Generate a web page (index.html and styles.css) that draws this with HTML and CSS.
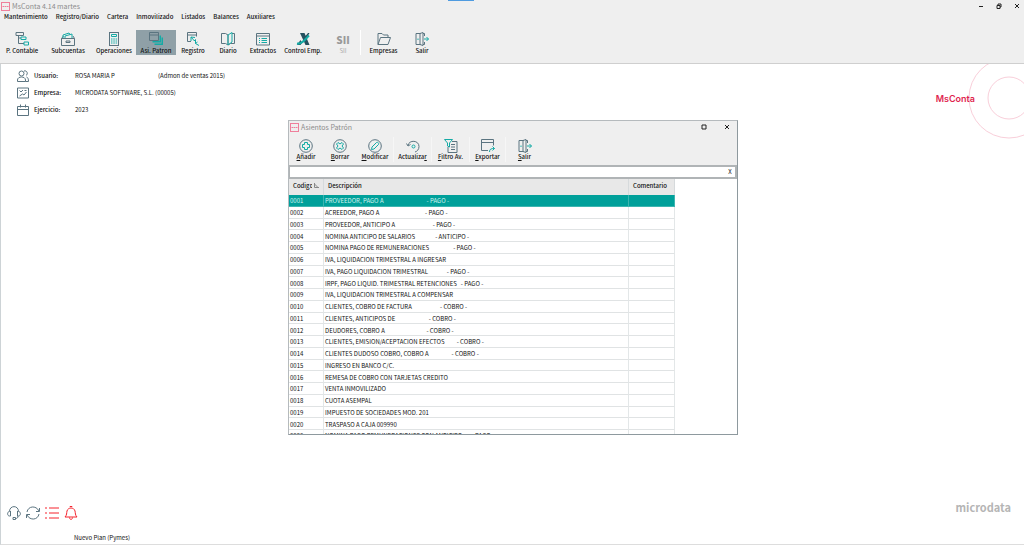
FILE: index.html
```html
<!DOCTYPE html>
<html lang="es">
<head>
<meta charset="utf-8">
<title>MsConta 4.14 martes</title>
<link rel="stylesheet" href="styles.css">
</head>
<body>
<svg class="defs" aria-hidden="true">
  <symbol id="i-exit" viewBox="0 0 14 14"><path d="M5.500 1.500H1v11h4.500M9.500 4V1.500H8M8 12.500h1.500V10"/><path d="M5 1.500 8 .5v13l-3-1z"/><path class="t" d="M9 7h4.500M11.500 5l2 2-2 2M3 6.500v1.500"/></symbol>
  <symbol id="i-app" viewBox="0 0 9 9"><rect x=".5" y=".5" width="8" height="8"/><path d="M1.500 4.500h2M4 4.500h1.500M6 4.500h1.500"/></symbol>
</svg>
<div class="app">
  <header class="top">
    <div class="titlebar">
      <svg class="logo"><use href="#i-app"/></svg>
      <h1 class="title">MsConta 4.14 martes</h1>
      <div class="wincontrols">
        <button aria-label="Minimizar"><svg viewBox="0 0 6 6"><path d="M1 3.500h4"/></svg></button>
        <button aria-label="Restaurar"><svg viewBox="0 0 6 6"><path d="M1 2.500h3v3H1zM2 2.500v-1.500h3v3H4"/></svg></button>
        <button aria-label="Cerrar"><svg viewBox="0 0 6 6"><path d="M1 1l4 4M5 1 1 5"/></svg></button>
      </div>
    </div>
    <nav class="menu">
      <button>Mantenimiento</button><button>Registro/Diario</button><button>Cartera</button><button>Inmovilizado</button><button>Listados</button><button>Balances</button><button>Auxiliares</button>
    </nav>
    <div class="toolbar">
      <button class="tool"><svg viewBox="0 0 14 14"><path d="M1 .5h7.500v3H1zM3.500 3.500v8H9M3.500 6H6"/><path class="t" d="M6 5h5v2.500H6zM9 10h4.500v3H9z"/></svg>P. Contable</button>
      <button class="tool"><svg viewBox="0 0 14 14"><path d="M.5 6.500h13v7H.5zM5 9h4v1.500H5zM.5 6.500 2.500 4M13.500 6.500 12 4"/><path class="t" d="M2 6V3l6-2 1 1.500M4 6V4l7-2v4"/></svg>Subcuentas</button>
      <button class="tool"><svg viewBox="0 0 14 14"><rect x="2.500" y=".5" width="9" height="13"/><path class="t" d="M4.500 2.500h5v2h-5zM4 7h1.500M6.300 7h1.500M8.600 7h1.500M4 9h1.500M6.300 9h1.500M8.600 9h1.500M4 11h1.500M6.300 11h1.500M8.600 11h1.500"/></svg>Operaciones</button>
      <button class="tool active" aria-pressed="true"><svg viewBox="0 0 14 14"><path class="fill" d="M10.500 3.500h1.500v7H3.500V9h7zM12.500 5.500H14V13H5.500v-1.500h7z"/><path d="M.5.5h9v8h-9zM.5 3h9"/></svg>Asi. Patron</button>
      <button class="tool"><svg viewBox="0 0 14 14"><path d="M5 9.500H1.500v-9h9v4M1.500 3h9"/><path class="t" d="M5 5l3.500 4M5 5l4 .5M5 5v4M8 9l1.500-1.500v4l3.500 2M9.500 11.500l2-1.500"/></svg>Registro</button>
      <button class="tool"><svg viewBox="0 0 14 14"><path d="M7 3 4.500 1.500H.5v10h4L7 13l2.500-1.500h4v-10H11M7 3v10"/><path class="t" d="M7 3l4-2.500v9.500L7 13z"/></svg>Diario</button>
      <button class="tool"><svg viewBox="0 0 14 14"><path d="M.5 1.500h13v11.500H.5zM.5 4h13"/><path class="t" d="M3 6.500h1M5.500 6.500H11M3 8.500h1M5.500 8.500H11M3 10.500h1M5.500 10.500H11"/></svg>Extractos</button>
      <button class="tool"><svg viewBox="0 0 14 14"><path class="dark" d="M4 1h4.500L13.500 13H9.500zM1 13l3.500-5 1.500 3-1.500 2zM9.500 4 12 1h1.500l-3 5z"/><path class="t wide" d="M1 11.500c5 1 8-4 12-8"/></svg>Control Emp.</button>
      <button class="tool off" disabled><span class="sii">SII</span>SII</button>
      <button class="tool first"><svg viewBox="0 0 14 14"><path d="M1 12.500V1.500h4L6.500 3H11v2.500M1 12.500l2.500-7h10L11 12.500z"/></svg>Empresas</button>
      <button class="tool"><svg><use href="#i-exit"/></svg>Salir</button>
    </div>
  </header>
  <main class="desk">
    <dl class="info">
      <dt><svg viewBox="0 0 12 12"><circle cx="4.500" cy="3.500" r="2.500"/><path d="M.5 11.500V10c0-4 8-4 8 0v1.500zM7 1c3-1 4.500 3 2 4.500M9.500 7c1.500.5 2 2 2 4.500h-3"/></svg>Usuario:</dt><dd>ROSA MARIA P</dd><dd>(Admon de ventas 2015)</dd>
      <dt><svg viewBox="0 0 12 12"><path d="M.5 1h11v10H.5zM2.500 3.500 4 5l2-2M7.500 3.500h2M2.500 9l3-2 1.500 1 2.500-3"/></svg>Empresa:</dt><dd class="long">MICRODATA SOFTWARE, S.L. (00005)</dd>
      <dt><svg viewBox="0 0 12 12"><path d="M.5 2.500h11v9H.5zM.5 5.500h11M3.500.5v3M8.500.5v3"/></svg>Ejercicio:</dt><dd class="long">2023</dd>
    </dl>
    <svg class="rings" viewBox="0 0 56 76"><circle cx="41" cy="34" r="40"/><circle cx="41" cy="34" r="21"/></svg>
    <p class="brand">MsConta</p>

    <section class="window" aria-label="Asientos Patrón">
      <div class="titlebar">
        <svg class="logo"><use href="#i-app"/></svg>
        <h2 class="title">Asientos Patrón</h2>
        <div class="wincontrols dialog">
          <button aria-label="Maximizar"><svg viewBox="0 0 6 6"><path d="M1 1h4v4H1z"/></svg></button>
          <button aria-label="Cerrar"><svg viewBox="0 0 6 6"><path d="M1 1l4 4M5 1 1 5"/></svg></button>
        </div>
      </div>
      <div class="actions">
        <button class="tool"><svg viewBox="0 0 14 14"><circle cx="7" cy="7" r="6.300"/><path class="t" d="M5.500 3.500h3v2h2v3h-2v2h-3v-2h-2v-3h2z"/></svg><span><u>A</u>ñadir</span></button>
        <button class="tool"><svg viewBox="0 0 14 14"><circle cx="7" cy="7" r="6.300"/><path class="t" d="M5 3.500l2 1.500 2-1.500L10.500 5 9 7l1.500 2L9 10.500 7 9l-2 1.500L3.500 9 5 7 3.500 5z"/></svg><span><u>B</u>orrar</span></button>
        <button class="tool"><svg viewBox="0 0 14 14"><circle cx="7" cy="7" r="6.300"/><path class="t" d="M3.500 10.500 4 8l4.500-4.500c1-1 3 1 2 2L6 10z"/></svg><span><u>M</u>odificar</span></button>
        <button class="tool line"><svg viewBox="0 0 14 14"><path d="M2 6.500c1-6 11-5.500 11 1 0 3-2 5-4 5.500M.5 4.500 2 7l2.500-1.500"/><circle class="t" cx="7.500" cy="7.500" r="1.500"/></svg><span>Actualiza<u>r</u></span></button>
        <button class="tool line"><svg viewBox="0 0 14 14"><path d="M8 2.500h5v11H4V8M7 5.500h4M7 8h4M7 10.500h4"/><path class="t" d="M.5.500h8L5.500 4v4l-2-1V4z"/></svg><span><u>F</u>iltro Av.</span></button>
        <button class="tool line"><svg viewBox="0 0 14 14"><path d="M7 11.500H.5v-11h12v6M.5 3.500h12"/><path class="t" d="M8.500 13c0-3 1.500-3.500 5-3.500M11.500 7.500l2 2-2 2"/></svg><span><u>E</u>xportar</span></button>
        <button class="tool line"><svg><use href="#i-exit"/></svg><span><u>S</u>alir</span></button>
      </div>
      <div class="search">
        <input type="text" aria-label="Buscar"><button aria-label="Borrar búsqueda">X</button>
      </div>
      <div class="list">
        <table>
          <thead><tr><th class="code">Codig<span class="cut">o</span><svg class="sort" viewBox="0 0 5 5"><path d="M.5 0v4.500H5M.5 1l3 3"/></svg></th><th>Descripción</th><th class="note">Comentario</th></tr></thead>
          <tbody>
            <tr class="selected"><td>0001</td><td>PROVEEDOR, PAGO A                                - PAGO -</td><td></td></tr>
            <tr><td>0002</td><td>ACREEDOR, PAGO A                                  - PAGO -</td><td></td></tr>
            <tr><td>0003</td><td>PROVEEDOR, ANTICIPO A                            - PAGO -</td><td></td></tr>
            <tr><td>0004</td><td>NOMINA ANTICIPO DE SALARIOS               - ANTICIPO -</td><td></td></tr>
            <tr><td>0005</td><td>NOMINA PAGO DE REMUNERACIONES                  - PAGO -</td><td></td></tr>
            <tr><td>0006</td><td>IVA, LIQUIDACION TRIMESTRAL A INGRESAR</td><td></td></tr>
            <tr><td>0007</td><td>IVA, PAGO LIQUIDACION TRIMESTRAL              - PAGO -</td><td></td></tr>
            <tr><td>0008</td><td>IRPF, PAGO LIQUID. TRIMESTRAL RETENCIONES   - PAGO -</td><td></td></tr>
            <tr><td>0009</td><td>IVA, LIQUIDACION TRIMESTRAL A COMPENSAR</td><td></td></tr>
            <tr><td>0010</td><td>CLIENTES, COBRO DE FACTURA                     - COBRO -</td><td></td></tr>
            <tr><td>0011</td><td>CLIENTES, ANTICIPOS DE                         - COBRO -</td><td></td></tr>
            <tr><td>0012</td><td>DEUDORES, COBRO A                               - COBRO -</td><td></td></tr>
            <tr><td>0013</td><td>CLIENTES, EMISION/ACEPTACION EFECTOS         - COBRO -</td><td></td></tr>
            <tr><td>0014</td><td>CLIENTES DUDOSO COBRO, COBRO A                 - COBRO -</td><td></td></tr>
            <tr><td>0015</td><td>INGRESO EN BANCO C/C.</td><td></td></tr>
            <tr><td>0016</td><td>REMESA DE COBRO CON TARJETAS CREDITO</td><td></td></tr>
            <tr><td>0017</td><td>VENTA INMOVILIZADO</td><td></td></tr>
            <tr><td>0018</td><td>CUOTA ASEMPAL</td><td></td></tr>
            <tr><td>0019</td><td>IMPUESTO DE SOCIEDADES MOD. 201</td><td></td></tr>
            <tr><td>0020</td><td>TRASPASO A CAJA 009990</td><td></td></tr>
            <tr class="partial"><td>0090</td><td>NOMINA PAGO REMUNERACIONES CON ANTICIPO       - PAGO -</td><td></td></tr>
          </tbody>
        </table>
      </div>
    </section>

    <footer class="foot">
      <div class="quick">
        <button aria-label="Soporte"><svg viewBox="0 0 14 14"><path d="M2.500 5.500C2.500-1 11.500-1 11.500 5.500M3.500 5v5h-1C0 10 0 5.500 2.500 5.500M10.500 5v5h1c2.500 0 2.500-4.500 0-4.500M11 10c0 2-1 2.500-2.500 2.500M6 11.500h2.500v2H6z"/></svg></button>
        <button aria-label="Sincronizar"><svg viewBox="0 0 14 14"><path d="M1 6c1-6 9-7 12-1M13 8c-1 6-9 7-12 1M13.500 2v3.500H10M.5 12V8.500H4"/></svg></button>
        <button class="red" aria-label="Lista"><svg viewBox="0 0 14 14"><path d="M0 2h2M0 7h2M0 12h2M4 2h10M4 7h10M4 12h10"/></svg></button>
        <button class="red" aria-label="Avisos"><svg viewBox="0 0 14 14"><path d="M1 11c2-2 1.500-4 2-6 1-4 7-4 8 0 .5 2 0 4 2 6zM6 1V.5h2V1M5.500 11.500c0 2.500 3 2.500 3 0"/></svg></button>
      </div>
      <p class="maker">microdata</p>
      <p class="status">Nuevo Plan (Pymes)</p>
    </footer>
  </main>
</div>
</body>
</html>
```
FILE: styles.css
```css
* { box-sizing: border-box; }
body {
  margin: 0;
  font: 6px/10px "Noto Sans CJK SC", "Noto Sans", sans-serif;
  color: #111;
  background: #fff;
}
button, input { font: inherit; color: inherit; background: none; border: 0; padding: 0; margin: 0; }
h1, h2, p, dl, dd { margin: 0; font-weight: 400; }
svg { fill: none; stroke: #5b7480; stroke-width: 1; display: block; flex: none; }
.defs { position: absolute; width: 0; height: 0; }
.t { stroke: #14aaa5; }
.fill { fill: #14aaa5; stroke: none; }
.wide { stroke-width: 2; }
.dark { fill: #24505f; stroke: none; }

.app { min-height: 100vh; display: flex; flex-direction: column; }
.top {
  height: 64px;
  background: linear-gradient(90deg, transparent 448px, #4f9be0 448px 474px, transparent 474px) top / 100% 1px no-repeat #efefef;
  border-bottom: 1px solid #cfcfcf;
}
.titlebar { display: flex; align-items: center; height: 12px; padding-left: 1px; gap: 2px; }
.titlebar .logo { width: 9px; height: 9px; stroke: #ef7f9b; }
.title { font-size: 7px; line-height: 12px; color: #8c8c8c; }
.wincontrols { display: flex; gap: 12px; margin-left: auto; padding-right: 4px; }
.wincontrols svg { width: 6px; height: 6px; stroke: #222; }
.menu { display: flex; gap: 8px; height: 10px; padding-left: 4px; font-weight: 500; }
.toolbar {
  display: grid;
  grid-template-columns: 44px 48px 44px 40px 34px 36px 34px 46px 34px 46px 32px;
  padding-top: 8px;
}
.tool {
  display: flex;
  flex-direction: column;
  align-items: center;
  gap: 1px;
  height: 25px;
  padding-top: 2px;
  line-height: 8px;
  white-space: nowrap;
  font-weight: 500;
}
.tool svg { width: 14px; height: 14px; }
.active { background: #8fa0a7; }
.off { color: #aaa; font-weight: 400; }
.sii { font-size: 10px; line-height: 14px; font-weight: 800; color: #999; padding-top: 1px; margin-bottom: -1px; }
.first { border-left: 1px solid #fff; }

.desk { position: relative; flex: 1; display: flex; flex-direction: column; border-left: 1px solid #cdd3d6; border-bottom: 1px solid #ddd; }
.info {
  display: grid;
  grid-template-columns: 58px 83px 1fr;
  row-gap: 5px;
  padding: 6px 0 0 16px;
  line-height: 12px;
}
.info dt { display: flex; align-items: center; gap: 5px; font-weight: 500; }
.info svg { width: 12px; height: 12px; }
.long { grid-column: span 2; }
.rings { position: absolute; right: 0; top: 0; width: 56px; height: 76px; stroke: #f9cfda; }
.brand { position: absolute; right: 49px; top: 28px; font: 600 9px/14px Inter, sans-serif; color: #e01f50; }

.window {
  position: absolute;
  left: 287px;
  top: 56px;
  width: 450px;
  height: 315px;
  display: flex;
  flex-direction: column;
  background: #efefef;
  border: 1px solid #b5babd;
  border-right-color: #8e999e;
  border-bottom-color: #8e999e;
}
.wincontrols.dialog { gap: 17px; padding-right: 7px; }
.actions { display: grid; grid-template-columns: 34px 34px 36px 38px 38px 36px 38px; padding-top: 4px; height: 32px; }
.actions .tool { gap: 0; }
.line { border-left: 1px solid #f6f6f6; }
.search { display: flex; height: 14px; border: 2px solid #b0b4b6; border-left-width: 1px; background: #fff; }
.search button { width: 10px; line-height: 10px; }
.search input { flex: 1; min-width: 0; outline: 0; }
.list { flex: 1; min-height: 0; overflow: hidden; background: #fff; }
table { width: 386px; height: 263px; table-layout: fixed; border-collapse: separate; border-spacing: 0; line-height: 8px; }
th { height: 16px; padding: 0 4px 2px; text-align: left; font-weight: 500; background: #e8e8e8; border-right: 1px solid #d6dadc; white-space: nowrap; }
th.code { width: 35px; }
th.note { width: 46px; }
.cut { display: inline-block; width: 2px; overflow: hidden; vertical-align: top; }
.sort { display: inline-block; width: 5px; height: 5px; margin-left: 2px; stroke: #888; }
td { padding: 2px 1px 0; white-space: pre; border-bottom: 1px solid #e0e3e4; border-right: 1px solid #e3e7e8; }
.selected td { color: #d5f3ef; background: #00a09a; border-color: #3db5b0; }
.partial td { vertical-align: top; }

.foot { margin-top: auto; display: grid; grid-template-columns: 1fr auto; padding: 0 13px 0 6px; }
.quick { display: flex; gap: 5px; align-items: center; height: 14px; }
.quick svg { width: 14px; height: 14px; }
.quick .red svg { stroke: #f5232d; }
.maker { font: 700 11px/14px "Noto Sans CJK SC", sans-serif; color: #b5b5b5; margin-top: -6px; }
.status { grid-column: 1 / -1; padding: 12px 0 0 67px; line-height: 12px; }
```
